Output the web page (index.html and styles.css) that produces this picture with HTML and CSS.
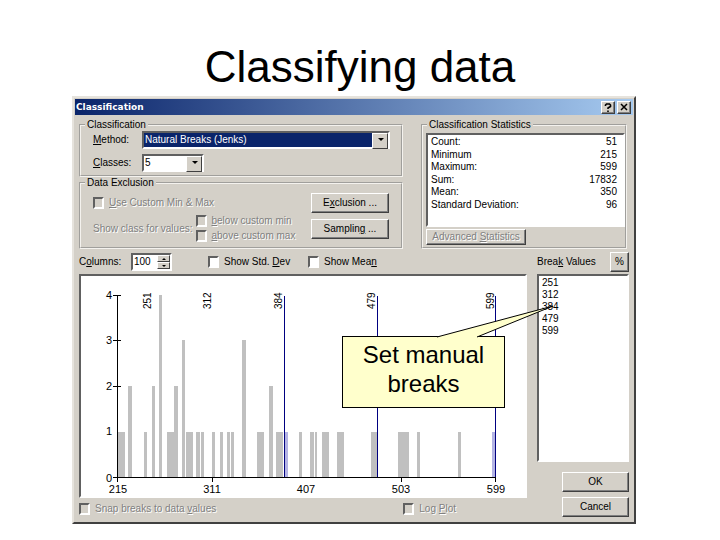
FILE: index.html
```
<!DOCTYPE html>
<html lang="en">
<head>
    <meta charset="UTF-8">
    <meta name="viewport" content="width=device-width, initial-scale=1.0">
    <title>Classifying data</title>
    <link rel="stylesheet" href="styles.css">
</head>
<body>
    <main class="slide">
        <h1>Classifying data</h1>

        <section class="dialog">
            <header class="title-bar">
                <h2>Classification</h2>
                <button class="title-button" type="button" aria-label="Help">
                    <svg width="8" height="9" viewBox="0 0 8 9"><path d="M1.500 3V2L2.500 1h3l1 1v1.500L4 5v1M4 7.500v1.500" fill="none" stroke="#000" stroke-width="1.600"/></svg>
                </button>
                <button class="title-button" type="button" aria-label="Close">
                    <svg width="8" height="8" viewBox="0 0 8 8"><path d="M1 1l6 6M7 1L1 7" stroke="#000" stroke-width="1.500"/></svg>
                </button>
            </header>

            <div class="dialog-body">
                <div class="top">
                    <div class="settings">
                        <fieldset class="method">
                            <legend>Classification</legend>
                            <div class="field">
                                <label for="method"><u>M</u>ethod:</label>
                                <span class="dropdown wide">
                                    <select id="method"><option>Natural Breaks (Jenks)</option></select>
                                </span>
                            </div>
                            <div class="field">
                                <label for="classes"><u>C</u>lasses:</label>
                                <span class="dropdown">
                                    <select id="classes"><option>5</option></select>
                                </span>
                            </div>
                        </fieldset>

                        <fieldset class="exclusion">
                            <legend>Data Exclusion</legend>
                            <div class="exclusion-options disabled">
                                <label class="check"><input type="checkbox" disabled> <span><u>U</u>se Custom Min &amp; Max</span></label>
                                <div class="show-class">
                                    <span>Show class for values:</span>
                                    <div class="custom-range">
                                        <label class="check"><input type="checkbox" disabled> <span><u>b</u>elow custom min</span></label>
                                        <label class="check"><input type="checkbox" disabled> <span><u>a</u>bove custom max</span></label>
                                    </div>
                                </div>
                            </div>
                            <div class="exclusion-buttons">
                                <button type="button">E<u>x</u>clusion ...</button>
                                <button type="button">Samplin<u>g</u> ...</button>
                            </div>
                        </fieldset>
                    </div>

                    <fieldset class="statistics">
                        <legend>Classification Statistics</legend>
                        <div class="stats-box">
                            <table>
                                <tr><th scope="row">Count:</th><td>51</td></tr>
                                <tr><th scope="row">Minimum</th><td>215</td></tr>
                                <tr><th scope="row">Maximum:</th><td>599</td></tr>
                                <tr><th scope="row">Sum:</th><td>17832</td></tr>
                                <tr><th scope="row">Mean:</th><td>350</td></tr>
                                <tr><th scope="row">Standard Deviation:</th><td>96</td></tr>
                            </table>
                        </div>
                        <button class="advanced disabled" type="button" disabled>Advanced <u>S</u>tatistics</button>
                    </fieldset>
                </div>

                <div class="bottom">
                    <div class="histogram">
                        <div class="histogram-options">
                            <label class="columns-label" for="columns">C<u>o</u>lumns:</label>
                            <span class="spinner">
                                <input id="columns" type="text" value="100">
                                <span class="spin-buttons">
                                    <button type="button" class="up" aria-label="More columns"></button>
                                    <button type="button" class="down" aria-label="Fewer columns"></button>
                                </span>
                            </span>
                            <label class="check std-dev"><input type="checkbox"> <span>Show Std. <u>D</u>ev</span></label>
                            <label class="check"><input type="checkbox"> <span>Show Mea<u>n</u></span></label>
                        </div>

                        <div class="chart">
                            <svg viewBox="81 276 444 220" role="img" aria-label="Histogram of values with class breaks">
                                <g class="bars">
                                    <path d="M118 477v-45h7v45zM144 477v-45h3v45zM167 477v-45h7v45zM186 477v-45h7v45zM196 477v-45h4v45zM201 477v-45h3v45zM212 477v-45h3v45zM220 477v-45h3v45zM227 477v-45h3v45zM231 477v-45h3v45z"/>
                                    <path d="M257 477v-45h7v45zM276 477v-45h7v45zM299 477v-45h3v45zM310 477v-45h4v45zM315 477v-45h2v45zM322 477v-45h7v45zM337 477v-45h7v45zM371 477v-45h6v45zM398 477v-45h11v45zM417 477v-45h3v45zM458 477v-45h3v45z"/>
                                    <path d="M128 477v-91h4v91zM152 477v-91h3v91zM174 477v-91h4v91zM269 477v-91h4v91z"/>
                                    <path d="M182 477v-137h3v137zM242 477v-137h4v137z"/>
                                    <path d="M159 477v-182h3v182z"/>
                                </g>
                                <path class="break-bars" d="M285 477v-45h3v45zM492 477v-45h3v45z"/>
                                <path class="breaks" d="M284.500 296v181M377.500 296v181M495.500 296v181"/>
                                <path class="axes" d="M117.500 295v187M113 295.500h8M113 340.500h8M113 386.500h8M113 477.500h383M212.500 477v5M401.500 477v5M495.500 477v5"/>
                                <g class="counts">
                                    <text x="112" y="299">4</text>
                                    <text x="112" y="344">3</text>
                                    <text x="112" y="390">2</text>
                                    <text x="112" y="435">1</text>
                                    <text x="112" y="482">0</text>
                                </g>
                                <g class="values">
                                    <text x="118" y="493">215</text>
                                    <text x="212" y="493">311</text>
                                    <text x="306" y="493">407</text>
                                    <text x="401" y="493">503</text>
                                    <text x="496" y="493">599</text>
                                </g>
                                <g class="break-labels">
                                    <text transform="translate(151 309) rotate(-90)">251</text>
                                    <text transform="translate(211 309) rotate(-90)">312</text>
                                    <text transform="translate(282 309) rotate(-90)">384</text>
                                    <text transform="translate(375 309) rotate(-90)">479</text>
                                    <text transform="translate(494 309) rotate(-90)">599</text>
                                </g>
                            </svg>

                            <aside class="callout">
                                <svg class="callout-tail" width="118" height="33" viewBox="0 0 118 33"><path d="M1 32L117 1L41 32" fill="#ffffcc" stroke="#000"/></svg>
                                <p>Set manual breaks</p>
                            </aside>
                        </div>

                        <div class="chart-options disabled">
                            <label class="check"><input type="checkbox" disabled> <span>Snap breaks to data <u>v</u>alues</span></label>
                            <label class="check log-plot"><input type="checkbox" disabled> <span>Log <u>P</u>lot</span></label>
                        </div>
                    </div>

                    <div class="break-panel">
                        <div class="break-header">
                            <span>Brea<u>k</u> Values</span>
                            <button type="button">%</button>
                        </div>
                        <ul class="break-values">
                            <li>251</li>
                            <li>312</li>
                            <li>384</li>
                            <li>479</li>
                            <li>599</li>
                        </ul>
                        <div class="actions">
                            <button type="button">OK</button>
                            <button type="button">Cancel</button>
                        </div>
                    </div>
                </div>
            </div>
        </section>
    </main>
</body>
</html>
```
FILE: styles.css
```
* {
    margin: 0;
    padding: 0;
    box-sizing: border-box;
}

body {
    background: #fff;
    color: #000;
    font-family: "Liberation Sans", Arial, sans-serif;
}

.slide {
    padding: 40px 84px 16px 72px;
}

h1 {
    margin: 0 -12px 3px 0;
    font-size: 44px;
    font-weight: normal;
    line-height: 53px;
    text-align: center;
}

.dialog {
    background: #d4d0c8;
    border: 2px solid;
    border-color: #e6e3dd #404040 #404040 #e6e3dd;
    padding: 1px;
    font-size: 10px;
    line-height: 12px;
}

.title-bar {
    display: flex;
    align-items: center;
    height: 16px;
    padding: 0 2px 0 1px;
    background: linear-gradient(90deg, #0a246a, #a6caf0);
}

.title-bar h2 {
    flex: 1;
    color: #fff;
    font-family: "DejaVu Sans", Verdana, sans-serif;
    font-size: 9px;
}

button {
    background: #d4d0c8;
    color: #000;
    border: 1px solid;
    border-color: #fff #404040 #404040 #fff;
    box-shadow: inset -1px -1px #808080;
    font: inherit;
    white-space: nowrap;
}

.title-button {
    display: flex;
    align-items: center;
    justify-content: center;
    width: 14px;
    height: 13px;
}

.title-button:last-child {
    margin-left: 2px;
}

.dialog-body {
    padding: 4px;
}

/* Option groups and statistics */
.top {
    display: flex;
    gap: 18px;
    padding-right: 2px;
}

.settings {
    flex: 1;
}

fieldset {
    min-width: 0;
    border: 2px groove #f4f2ee;
}

legend {
    margin-left: -8px;
    padding: 0 2px;
}

.method {
    display: flex;
    flex-direction: column;
    gap: 5px;
    padding: 0 11px 3px 12px;
}

.field {
    display: flex;
    align-items: center;
    height: 18px;
}

.field label {
    width: 49px;
}

.dropdown {
    position: relative;
    width: 62px;
    height: 18px;
}

.dropdown.wide {
    flex: 1;
}

select,
.spinner,
.stats-box,
.chart,
.break-values {
    background: #fff;
    border: 2px solid;
    border-color: #606060 #fff #fff #606060;
}

select {
    appearance: none;
    width: 100%;
    height: 18px;
    padding-left: 1px;
    border-radius: 0;
    color: #000;
    font: inherit;
}

.wide select {
    background: #0a246a;
    color: #fff;
}

.dropdown::before {
    content: "";
    position: absolute;
    top: 2px;
    right: 2px;
    width: 14px;
    height: 14px;
    background: #d4d0c8;
    border: 1px solid;
    border-color: #fff #404040 #404040 #fff;
    pointer-events: none;
}

.dropdown::after {
    content: "";
    position: absolute;
    top: 7px;
    right: 6px;
    border: 3px solid transparent;
    border-top-color: #000;
    border-bottom: 0;
    pointer-events: none;
}

.exclusion {
    display: flex;
    align-items: flex-start;
    justify-content: space-between;
    padding: 4px 12px 5px;
}

.disabled {
    color: #808080;
    text-shadow: 1px 1px #fff;
}

.check {
    display: flex;
    align-items: center;
    gap: 5px;
    height: 12px;
    white-space: nowrap;
}

input[type="checkbox"] {
    appearance: none;
    width: 11px;
    height: 12px;
    background: #fff;
    border: 2px solid;
    border-color: #606060 #fff #fff #606060;
}

input[type="checkbox"]:disabled {
    background: #d4d0c8;
}

.exclusion-options {
    padding-top: 4px;
}

.show-class {
    display: flex;
    align-items: center;
    gap: 3px;
    padding-top: 6px;
    white-space: nowrap;
}

.custom-range {
    display: grid;
    gap: 3px;
}

.exclusion-buttons {
    display: grid;
    gap: 6px;
    width: 78px;
}

.exclusion-buttons button {
    height: 20px;
}

.statistics {
    width: 206px;
    padding: 2px 0 2px 3px;
}

.statistics legend {
    margin-left: 1px;
}

.stats-box {
    height: 94px;
    padding: 1px 6px 0 3px;
}

.stats-box table {
    width: 100%;
    height: 75px;
    border-collapse: collapse;
}

.stats-box th {
    font-weight: normal;
    text-align: left;
}

.stats-box td {
    text-align: right;
}

.advanced {
    display: block;
    width: 100px;
    height: 16px;
    margin-top: 2px;
    line-height: 12px;
}

/* Histogram and break values */
.bottom {
    display: flex;
    gap: 10px;
}

.histogram {
    flex: 1;
}

.histogram-options,
.break-header {
    display: flex;
    height: 25px;
    padding-top: 1px;
    align-items: center;
}

.columns-label {
    width: 52px;
}

.spinner {
    display: flex;
    width: 41px;
    height: 18px;
    margin-right: 36px;
}

.spinner input {
    flex: 1;
    min-width: 0;
    padding-left: 1px;
    border: 0;
    font: inherit;
}

.spin-buttons {
    display: grid;
    width: 13px;
}

.spin-buttons button {
    display: flex;
    align-items: center;
    justify-content: center;
    height: 7px;
    box-shadow: none;
}

.spin-buttons button::after {
    content: "";
    border: 2px solid transparent;
}

.spin-buttons .up::after {
    border-top: 0;
    border-bottom-color: #000;
}

.spin-buttons .down::after {
    border-bottom: 0;
    border-top-color: #000;
}

.std-dev {
    width: 100px;
}

.chart {
    position: relative;
}

.chart > svg {
    display: block;
    width: 100%;
    height: auto;
}

.bars {
    fill: #c0c0c0;
}

.break-bars {
    fill: #b4b4e4;
}

.breaks {
    stroke: #000080;
}

.axes {
    fill: none;
    stroke: #000;
}

.counts,
.values {
    font-size: 11px;
    text-anchor: middle;
}

.counts {
    text-anchor: end;
}

.callout {
    position: absolute;
    top: 60px;
    left: 261px;
    width: 163px;
    padding: 3px 16px 9px;
    background: #ffffcc;
    border: 1px solid #000;
    font-size: 24px;
    line-height: 29px;
    text-align: center;
}

.callout-tail {
    position: absolute;
    top: -32px;
    left: 93px;
}

.chart-options {
    display: flex;
    padding-top: 5px;
}

.log-plot {
    margin-left: auto;
    margin-right: 71px;
}

.break-panel {
    width: 92px;
}

.break-header {
    justify-content: space-between;
}

.break-header button {
    width: 19px;
    height: 20px;
}

.break-values {
    height: 188px;
    padding: 1px 3px;
    list-style: none;
}

.actions {
    display: grid;
    justify-content: end;
    gap: 5px;
    padding-top: 10px;
}

.actions button {
    width: 67px;
    height: 20px;
}
```
